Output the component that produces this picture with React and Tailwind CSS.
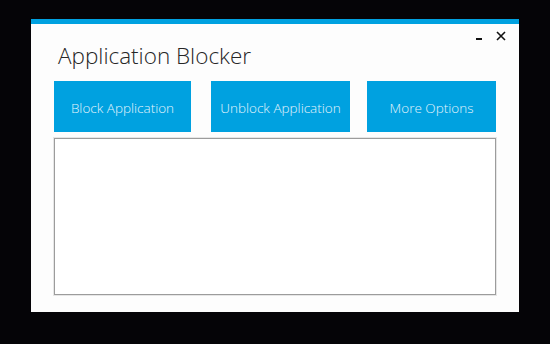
export default function App() {
  const font = { fontFamily: '"Open Sans", "Noto Sans", sans-serif' };
  return (
    <div className="w-[550px] h-[344px] bg-[#050407] pt-[19px] pl-[31px]" style={font}>
      <div className="w-[488px] h-[293px] bg-[#fdfdfd] border-t-[5px] border-[#00a1e0] flex flex-col">
        <div className="relative h-[57px] shrink-0">
          <div className="absolute left-[27px] top-[17px] text-[22.5px] leading-[30px] font-light text-[#262626]">
            Application Blocker
          </div>
          <div className="absolute right-[13px] top-[7px] flex items-center gap-[14px] text-[#111]">
            <div className="w-[6px] h-[2px] bg-[#111] mt-[6px]" />
            <svg width="10" height="10" viewBox="0 0 10 10">
              <path d="M1 1L9 9M9 1L1 9" stroke="#111" strokeWidth="1.6" />
            </svg>
          </div>
        </div>
        <div className="flex pl-[23px] gap-[19px]">
          <button className="w-[137px] h-[51px] pt-[3px] bg-[#00a1e0] text-[#e2f3fc] text-[13.5px] font-light">
            Block Application
          </button>
          <button className="w-[139px] h-[51px] pt-[3px] bg-[#00a1e0] text-[#e2f3fc] text-[13.5px] font-light ml-[1px]">
            Unblock Application
          </button>
          <button className="w-[129px] h-[51px] pt-[3px] bg-[#00a1e0] text-[#e2f3fc] text-[13.5px] font-light ml-[-2px]">
            More Options
          </button>
        </div>
        <div className="ml-[23px] mt-[6px] w-[442px] h-[157px] border border-[#9c9c9c] bg-white shadow-[0_0_0_1px_#e6e6e6]" />
      </div>
    </div>
  );
}
